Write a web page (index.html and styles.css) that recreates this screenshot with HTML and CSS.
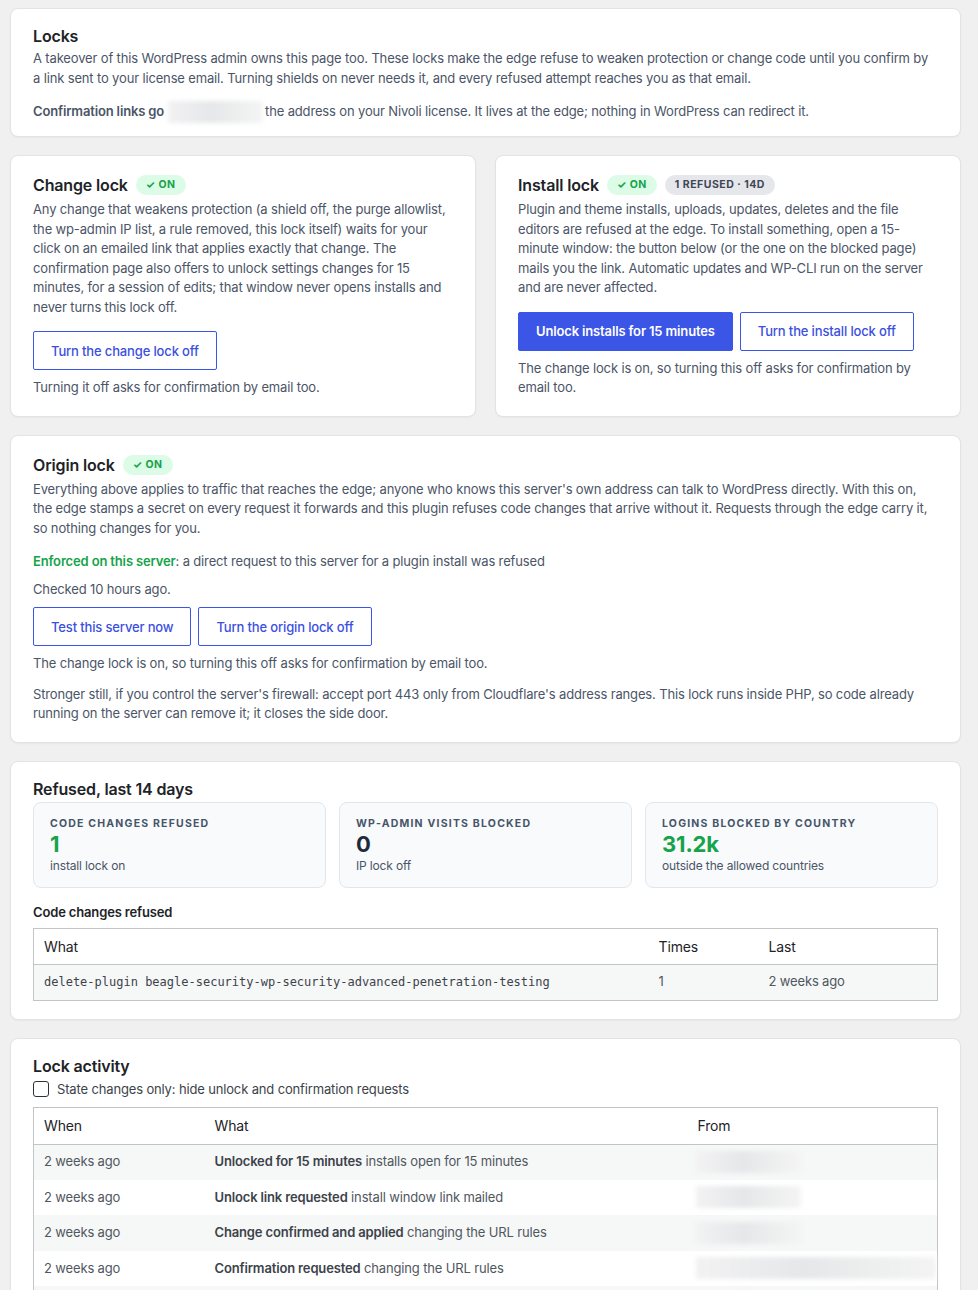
FILE: index.html
```html
<!DOCTYPE html>
<html lang="en">
<head>
    <meta charset="UTF-8">
    <meta name="viewport" content="width=device-width, initial-scale=1.0">
    <title>Locks</title>
    <link rel="stylesheet" href="styles.css">
</head>
<body>
    <div class="wrap">

        <!-- Intro -->
        <section class="card card-intro">
            <div class="card-head"><h2>Locks</h2></div>
            <p>A takeover of this WordPress admin owns this page too. These locks make the edge refuse to weaken protection or change code until you confirm by a link sent to your license email. Turning shields on never needs it, and every refused attempt reaches you as that email.</p>
            <p class="mt-lg"><strong>Confirmation links go</strong> <span class="redacted email"></span> the address on your Nivoli license. It lives at the edge; nothing in WordPress can redirect it.</p>
        </section>

        <div class="pair">
            <!-- Change lock -->
            <section class="card">
                <div class="card-head">
                    <h2>Change lock</h2>
                    <span class="badge badge-on">&#10003; On</span>
                </div>
                <p>Any change that weakens protection (a shield off, the purge allowlist, the wp-admin IP list, a rule removed, this lock itself) waits for your click on an emailed link that applies exactly that change. The confirmation page also offers to unlock settings changes for 15 minutes, for a session of edits; that window never opens installs and never turns this lock off.</p>
                <div class="actions mt-btn">
                    <button type="button" class="btn btn-outline">Turn the change lock off</button>
                </div>
                <p class="mt-sm">Turning it off asks for confirmation by email too.</p>
            </section>

            <!-- Install lock -->
            <section class="card">
                <div class="card-head">
                    <h2>Install lock</h2>
                    <span class="badge badge-on">&#10003; On</span>
                    <span class="badge badge-muted">1 refused &middot; 14d</span>
                </div>
                <p>Plugin and theme installs, uploads, updates, deletes and the file editors are refused at the edge. To install something, open a 15-minute window: the button below (or the one on the blocked page) mails you the link. Automatic updates and WP-CLI run on the server and are never affected.</p>
                <div class="actions mt-btn">
                    <button type="button" class="btn btn-primary">Unlock installs for 15 minutes</button>
                    <button type="button" class="btn btn-outline">Turn the install lock off</button>
                </div>
                <p class="mt-sm">The change lock is on, so turning this off asks for confirmation by email too.</p>
            </section>
        </div>

        <!-- Origin lock -->
        <section class="card card-origin">
            <div class="card-head">
                <h2>Origin lock</h2>
                <span class="badge badge-on">&#10003; On</span>
            </div>
            <p>Everything above applies to traffic that reaches the edge; anyone who knows this server's own address can talk to WordPress directly. With this on, the edge stamps a secret on every request it forwards and this plugin refuses code changes that arrive without it. Requests through the edge carry it, so nothing changes for you.</p>
            <p class="mt-lg"><strong class="ok">Enforced on this server</strong>: a direct request to this server for a plugin install was refused</p>
            <p class="mt-sm">Checked 10 hours ago.</p>
            <div class="actions mt-sm">
                <button type="button" class="btn btn-outline">Test this server now</button>
                <button type="button" class="btn btn-outline">Turn the origin lock off</button>
            </div>
            <p class="mt-sm">The change lock is on, so turning this off asks for confirmation by email too.</p>
            <p class="mt-md">Stronger still, if you control the server's firewall: accept port 443 only from Cloudflare's address ranges. This lock runs inside PHP, so code already running on the server can remove it; it closes the side door.</p>
        </section>

        <!-- Refused counters -->
        <section class="card">
            <div class="card-head"><h2>Refused, last 14 days</h2></div>
            <div class="stats">
                <div class="stat">
                    <div class="stat-label">Code changes refused</div>
                    <div class="stat-value ok">1</div>
                    <div class="stat-sub">install lock on</div>
                </div>
                <div class="stat">
                    <div class="stat-label">wp-admin visits blocked</div>
                    <div class="stat-value">0</div>
                    <div class="stat-sub">IP lock off</div>
                </div>
                <div class="stat">
                    <div class="stat-label">Logins blocked by country</div>
                    <div class="stat-value ok">31.2k</div>
                    <div class="stat-sub">outside the allowed countries</div>
                </div>
            </div>

            <h3>Code changes refused</h3>
            <table class="widefat">
                <colgroup>
                    <col style="width:615px">
                    <col style="width:110px">
                    <col>
                </colgroup>
                <thead>
                    <tr><th>What</th><th>Times</th><th>Last</th></tr>
                </thead>
                <tbody>
                    <tr>
                        <td><code>delete-plugin beagle-security-wp-security-advanced-penetration-testing</code></td>
                        <td>1</td>
                        <td>2 weeks ago</td>
                    </tr>
                </tbody>
            </table>
        </section>

        <!-- Activity log -->
        <section class="card">
            <div class="card-head"><h2>Lock activity</h2></div>
            <label class="check">
                <input type="checkbox">
                <span>State changes only: hide unlock and confirmation requests</span>
            </label>
            <table class="widefat log">
                <colgroup>
                    <col style="width:171px">
                    <col style="width:483px">
                    <col>
                </colgroup>
                <thead>
                    <tr><th>When</th><th>What</th><th>From</th></tr>
                </thead>
                <tbody>
                    <tr>
                        <td>2 weeks ago</td>
                        <td><strong>Unlocked for 15 minutes</strong> installs open for 15 minutes</td>
                        <td><span class="redacted ip"></span></td>
                    </tr>
                    <tr>
                        <td>2 weeks ago</td>
                        <td><strong>Unlock link requested</strong> install window link mailed</td>
                        <td><span class="redacted ip"></span></td>
                    </tr>
                    <tr>
                        <td>2 weeks ago</td>
                        <td><strong>Change confirmed and applied</strong> changing the URL rules</td>
                        <td><span class="redacted ip"></span></td>
                    </tr>
                    <tr>
                        <td>2 weeks ago</td>
                        <td><strong>Confirmation requested</strong> changing the URL rules</td>
                        <td><span class="redacted ip ip-long"></span></td>
                    </tr>
                    <tr>
                        <td>2 weeks ago</td>
                        <td><strong>Unlock link requested</strong> install window link mailed</td>
                        <td><span class="redacted ip"></span></td>
                    </tr>
                </tbody>
            </table>
        </section>

    </div>
</body>
</html>
```

FILE: styles.css
```css
* {
    margin: 0;
    padding: 0;
    box-sizing: border-box;
}

body {
    font-family: Inter, "Noto Sans", "Liberation Sans", sans-serif;
    font-size: 13px;
    line-height: 1.5;
    letter-spacing: -0.15px;
    background: #f0f0f1;
    color: #4b5567;
}

.wrap {
    display: flex;
    flex-direction: column;
    gap: 18px;
    margin: 8px 17px 0 10px;
}

/* cards */
.card {
    background: #fff;
    border: 1px solid #e1e3e8;
    border-radius: 8px;
    box-shadow: 0 1px 2px rgba(0, 0, 0, 0.04);
    padding: 16px 22px 18px;
}

.card-intro {
    padding-bottom: 13px;
}

.card-origin .mt-lg { margin-top: 14px; }
.card-origin .mt-md { margin-top: 11px; }

.pair {
    display: grid;
    grid-template-columns: 1fr 1fr;
    gap: 19px;
}

.card-head {
    display: flex;
    align-items: center;
    gap: 8px;
    min-height: 22px;
    margin-bottom: 2px;
}

h2 {
    font-size: 16px;
    font-weight: 600;
    line-height: 22px;
    color: #1d2327;
}

h3 {
    font-size: 13px;
    font-weight: 600;
    line-height: 20px;
    color: #1d2327;
    margin: 14px 0 6px;
}

p strong {
    font-weight: 600;
}

.mt-sm { margin-top: 8px; }
.mt-md { margin-top: 10px; }
.mt-lg { margin-top: 13px; }
.mt-btn { margin-top: 14px; }

.ok {
    color: #16a34a;
}

/* pills next to titles */
.badge {
    display: inline-flex;
    align-items: center;
    height: 20px;
    margin: 3px 0;
    padding: 0 10px;
    border-radius: 10px;
    font-size: 10.5px;
    font-weight: 700;
    letter-spacing: 0.5px;
    text-transform: uppercase;
}

.badge-on {
    background: #dcfce7;
    color: #16a34a;
}

.badge-muted {
    background: #e5e7eb;
    color: #3f4654;
}

/* buttons */
.actions {
    display: flex;
    gap: 7px;
}

.btn {
    height: 39px;
    padding: 0 17px;
    font-family: inherit;
    font-size: 13px;
    font-weight: 500;
    letter-spacing: inherit;
    border-radius: 2px;
    border: 1px solid #3b55e6;
    cursor: pointer;
}

.btn-outline {
    background: #fff;
    color: #3b50e0;
}

.btn-primary {
    background: #3b55e6;
    color: #fff;
    font-weight: 600;
}

/* blurred personal data */
.redacted {
    display: inline-block;
    vertical-align: middle;
    background: linear-gradient(90deg, #f2f2f3, #e6e7e9 45%, #eceded 70%, #f4f4f5);
    filter: blur(2px);
}

.email {
    width: 94px;
    height: 22px;
}

.ip {
    width: 105px;
    height: 22px;
    margin-left: -2px;
}

.ip-long {
    width: 240px;
}

/* stat tiles */
.stats {
    display: grid;
    grid-template-columns: repeat(3, 1fr);
    gap: 13px;
}

.stat {
    background: #f8fafc;
    border: 1px solid #e2e6ec;
    border-radius: 8px;
    padding: 14px 16px 12px;
}

.stat-label {
    font-size: 10.5px;
    line-height: 14px;
    font-weight: 700;
    letter-spacing: 1.2px;
    text-transform: uppercase;
    color: #475569;
}

.stat-value {
    font-size: 22px;
    line-height: 26px;
    font-weight: 700;
    color: #1e293b;
}

.stat-value.ok {
    color: #16a34a;
}

.stat-sub {
    font-size: 12px;
    line-height: 18px;
    color: #4b5567;
}

/* tables */
table.widefat {
    width: 100%;
    border: 1px solid #c3c4c7;
    border-collapse: collapse;
    table-layout: fixed;
    color: #3c434a;
}

.widefat th {
    height: 36px;
    padding: 0 10px;
    text-align: left;
    font-size: 14px;
    font-weight: 400;
    color: #1d2327;
    border-bottom: 1px solid #c3c4c7;
}

.widefat td {
    height: 36px;
    padding: 0 10px;
    font-size: 13px;
    color: #50575e;
}

.widefat tbody tr:nth-child(odd) {
    background: #f6f7f7;
}

.widefat td strong {
    font-weight: 600;
    color: #3c434a;
}

.log th {
    height: 37px;
}

.log td {
    height: 35.5px;
}

code {
    font-family: "DejaVu Sans Mono", "Liberation Mono", monospace;
    font-size: 12px;
    letter-spacing: 0;
    color: #3c434a;
}

/* checkbox filter */
.check {
    display: flex;
    align-items: center;
    gap: 8px;
    margin: 2px 0 8px;
    color: #3c434a;
    line-height: 20px;
}

.check input {
    appearance: none;
    width: 16px;
    height: 16px;
    border: 1px solid #2c3338;
    border-radius: 3px;
    background: #fff;
}
```
